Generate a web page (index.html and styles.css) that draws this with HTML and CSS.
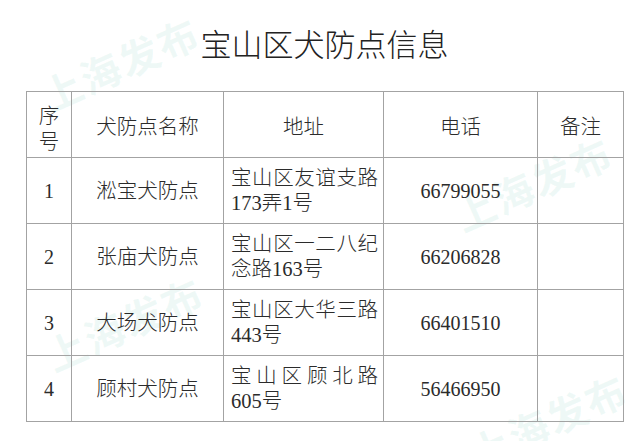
FILE: index.html
```html
<!DOCTYPE html>
<html lang="zh-CN">
<head>
<meta charset="utf-8">
<title>宝山区犬防点信息</title>
<link rel="stylesheet" href="styles.css">
</head>
<body>
<div class="page">
  <div class="watermarks" aria-hidden="true">
    <span class="wm wm-a">上海发布</span>
    <span class="wm wm-b">上海发布</span>
    <span class="wm wm-c">上海发布</span>
    <span class="wm wm-d">上海发布</span>
  </div>
  <div class="sheet">
    <h1 class="title">宝山区犬防点信息</h1>
    <table class="info">
      <colgroup>
        <col class="c-no">
        <col class="c-name">
        <col class="c-addr">
        <col class="c-tel">
        <col class="c-note">
      </colgroup>
      <thead>
        <tr>
          <th class="no"><span class="stack">序</span><span class="stack">号</span></th>
          <th>犬防点名称</th>
          <th>地址</th>
          <th>电话</th>
          <th>备注</th>
        </tr>
      </thead>
      <tbody>
        <tr>
          <td class="no">1</td>
          <td>淞宝犬防点</td>
          <td class="addr">宝山区友谊支路173弄1号</td>
          <td class="tel">66799055</td>
          <td></td>
        </tr>
        <tr>
          <td class="no">2</td>
          <td>张庙犬防点</td>
          <td class="addr">宝山区一二八纪念路163号</td>
          <td class="tel">66206828</td>
          <td></td>
        </tr>
        <tr>
          <td class="no">3</td>
          <td>大场犬防点</td>
          <td class="addr">宝山区大华三路443号</td>
          <td class="tel">66401510</td>
          <td></td>
        </tr>
        <tr>
          <td class="no">4</td>
          <td>顾村犬防点</td>
          <td class="addr">宝山区顾北路605号</td>
          <td class="tel">56466950</td>
          <td></td>
        </tr>
      </tbody>
    </table>
  </div>
</div>
</body>
</html>
```

FILE: styles.css
```css
html, body {
  margin: 0;
  padding: 0;
  background: #ffffff;
}

body {
  font-family: "Liberation Serif", "Noto Sans CJK SC", serif;
  color: #2b2b2b;
}

.page {
  position: relative;
  width: 640px;
  height: 441px;
  overflow: hidden;
}

.watermarks {
  position: absolute;
  inset: 0;
  pointer-events: none;
}

.wm {
  position: absolute;
  font-family: "Noto Sans CJK SC", sans-serif;
  font-weight: 700;
  font-size: 40px;
  line-height: 1;
  letter-spacing: 2px;
  color: rgba(120, 205, 185, 0.12);
  white-space: nowrap;
  transform: translate(-50%, -50%) rotate(-24deg);
}

.wm-a { left: 120px; top: 63px; }
.wm-b { left: 533px; top: 183px; }
.wm-c { left: 124px; top: 323px; }
.wm-d { left: 548px; top: 420px; }

.sheet {
  position: relative;
  padding: 0 0 0 26px;
  width: 597px;
}

.title {
  margin: 0;
  padding: 27px 0 33px;
  height: 31px;
  font-family: "Noto Sans CJK SC", sans-serif;
  font-weight: 300;
  font-size: 31px;
  line-height: 31px;
  text-align: center;
  color: #222;
}

.info {
  width: 597px;
  table-layout: fixed;
  border-collapse: collapse;
  font-size: 20.5px;
  font-weight: 300;
}

.c-no { width: 45px; }
.c-name { width: 152px; }
.c-addr { width: 160px; }
.c-tel { width: 154px; }
.c-note { width: 86px; }

.info th,
.info td {
  border: 1px solid #a3a3a3;
  height: 65px;
  padding: 0;
  text-align: center;
  vertical-align: middle;
  font-weight: 300;
  line-height: 24px;
}

.info th {
  font-family: "Noto Sans CJK SC", sans-serif;
}

.stack {
  display: block;
  line-height: 30px;
  height: 26px;
  overflow: visible;
}

.info td.no,
.info td.tel {
  font-size: 20px;
}

.info td.addr {
  text-align: justify;
  text-align-last: left;
  padding: 0 5px 0 7px;
  font-size: 20.5px;
  line-height: 25px;
}
```
